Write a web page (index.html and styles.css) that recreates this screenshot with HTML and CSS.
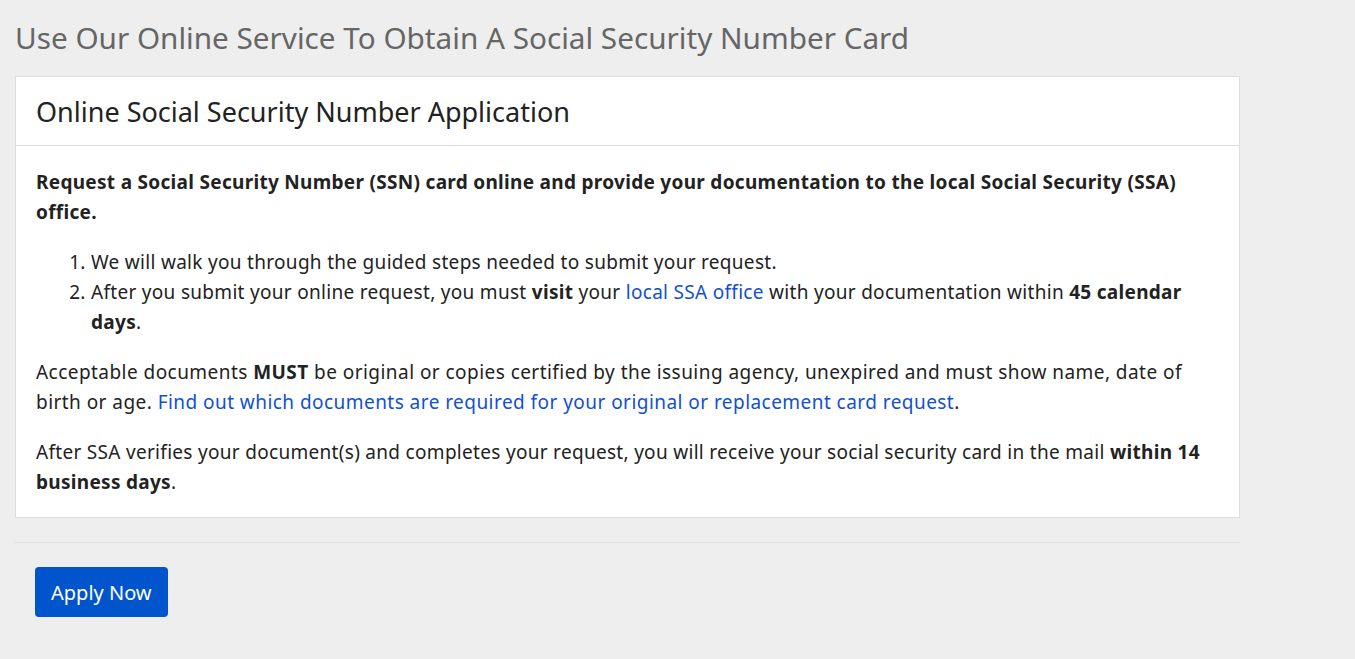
FILE: index.html
```html
<!DOCTYPE html>
<html lang="en">
<head>
    <meta charset="UTF-8">
    <meta name="viewport" content="width=device-width, initial-scale=1.0">
    <title>Online Social Security Number Application</title>
    <link rel="stylesheet" href="styles.css">
</head>
<body>

    <div class="page">
        <h1 class="page-title">Use Our Online Service To Obtain A Social Security Number Card</h1>

        <div class="panel">
            <div class="panel-heading">
                <h2>Online Social Security Number Application</h2>
            </div>
            <div class="panel-body">
                <p class="lead"><strong>Request a Social Security Number (SSN) card online and provide your documentation to the local Social Security (SSA) office.</strong></p>
                <ol class="steps">
                    <li>We will walk you through the guided steps needed to submit your request.</li>
                    <li>After you submit your online request, you must <strong>visit</strong> your <a href="#">local SSA office</a> with your documentation within <strong>45 calendar days</strong>.</li>
                </ol>
                <p class="docs">Acceptable documents <strong>MUST</strong> be original or copies certified by the issuing agency, unexpired and must show name, date of birth or age. <a href="#">Find out which documents are required for your original or replacement card request</a>.</p>
                <p>After SSA verifies your document(s) and completes your request, you will receive your social security card in the mail <strong>within 14 business days</strong>.</p>
            </div>
        </div>

        <hr class="divider">

        <div class="actions">
            <button class="btn-apply">Apply Now</button>
        </div>
    </div>

</body>
</html>
```

FILE: styles.css
```css
html, body {
    margin: 0;
    padding: 0;
}
body {
    font-family: "Noto Sans", "Open Sans", sans-serif;
    background-color: #eeeeee;
    color: #222;
    font-size: 19px;
    letter-spacing: 0.3px;
}
.page {
    width: 1225px;
    padding: 16px 0 0 15px;
}
.page-title {
    font-size: 29.7px;
    font-weight: 400;
    letter-spacing: 0;
    color: #666;
    margin: 0 0 16px 0;
    line-height: 44px;
}
.panel {
    background-color: #fff;
    border: 1px solid #dddddd;
}
.panel-heading {
    border-bottom: 1px solid #dddddd;
    padding: 0 20px;
    height: 68px;
    display: flex;
    align-items: center;
}
.panel-heading h2 {
    margin: 0;
    font-size: 27px;
    font-weight: 400;
    letter-spacing: 0;
    color: #222;
}
.panel-body {
    padding: 21px 20px 0 20px;
    line-height: 30px;
}
.panel-body p {
    margin: 0 0 20px 0;
}
.panel-body .docs {
    letter-spacing: 0.45px;
}
.steps {
    margin: 0 0 20px 0;
    padding-left: 55px;
}
a {
    color: #1150d0;
    text-decoration: none;
}
.divider {
    border: none;
    border-top: 1px solid #dddddd;
    margin: 24px 0 24px 0;
}
.actions {
    padding-left: 20px;
}
.btn-apply {
    font-family: inherit;
    background-color: #0055cc;
    color: #fff;
    font-size: 20px;
    letter-spacing: 0;
    border: none;
    border-radius: 4px;
    height: 50px;
    padding: 0 16px;
    cursor: pointer;
}
```
